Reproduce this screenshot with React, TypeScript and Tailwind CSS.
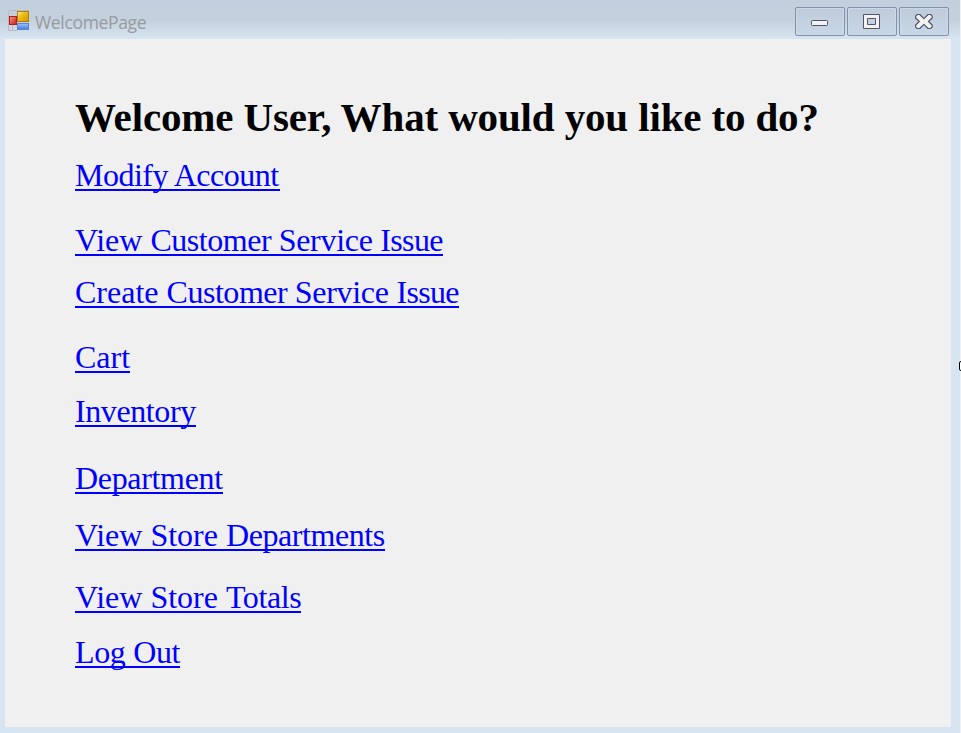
import React from "react";

type Word = { text: string; tracking: string };

const links: { box: string; words: Word[] }[] = [
  {
    box: "mt-[21px] w-[205px]",
    words: [
      { text: "Modify ", tracking: "tracking-[-0.5px]" },
      { text: "Account", tracking: "tracking-[-0.5px]" },
    ],
  },
  {
    box: "mt-[34px] w-[368px]",
    words: [
      { text: "View ", tracking: "tracking-[0px]" },
      { text: "Customer ", tracking: "tracking-[-0.46px]" },
      { text: "Service ", tracking: "tracking-[-0.3px]" },
      { text: "Issue", tracking: "tracking-[-0.65px]" },
    ],
  },
  {
    box: "mt-[21px] w-[384px]",
    words: [
      { text: "Create ", tracking: "tracking-[0px]" },
      { text: "Customer ", tracking: "tracking-[-0.46px]" },
      { text: "Service ", tracking: "tracking-[-0.3px]" },
      { text: "Issue", tracking: "tracking-[-0.65px]" },
    ],
  },
  { box: "mt-[34px] w-[55px]", words: [{ text: "Cart", tracking: "tracking-[0px]" }] },
  { box: "mt-[23px] w-[121px]", words: [{ text: "Inventory", tracking: "tracking-[-0.4px]" }] },
  { box: "mt-[36px] w-[148px]", words: [{ text: "Department", tracking: "tracking-[-0.33px]" }] },
  {
    box: "mt-[26px] w-[310px]",
    words: [
      { text: "View Store ", tracking: "tracking-[0px]" },
      { text: "Departments", tracking: "tracking-[-0.42px]" },
    ],
  },
  {
    box: "mt-[31px] w-[226px]",
    words: [
      { text: "View Store ", tracking: "tracking-[0px]" },
      { text: "Totals", tracking: "tracking-[-0.4px]" },
    ],
  },
  { box: "mt-[24px] w-[105px]", words: [{ text: "Log Out", tracking: "tracking-[-0.35px]" }] },
];

function AppIcon() {
  return (
    <svg width="22" height="22" viewBox="0 0 22 22" shapeRendering="crispEdges">
      <defs>
        <linearGradient id="gold" x1="0" y1="0" x2="1" y2="1">
          <stop offset="0" stopColor="#fff0a0" />
          <stop offset="0.4" stopColor="#eebc18" />
          <stop offset="1" stopColor="#d79500" />
        </linearGradient>
        <linearGradient id="blue" x1="0" y1="0" x2="0" y2="1">
          <stop offset="0" stopColor="#9cc4fc" />
          <stop offset="1" stopColor="#4478e0" />
        </linearGradient>
        <linearGradient id="red" x1="0" y1="0" x2="1" y2="1">
          <stop offset="0" stopColor="#f59b90" />
          <stop offset="1" stopColor="#c31818" />
        </linearGradient>
      </defs>
      <path d="M.5 .5H21M.5 .5V20.5H9M4.5 15V20" fill="none" stroke="#bcb9bb" />
      <rect x="9.5" y="1.5" width="11" height="10" fill="url(#gold)" stroke="#ad7b10" />
      <rect x="9.5" y="13.5" width="11" height="6" fill="url(#blue)" stroke="#5a86cf" />
      <rect x="1.5" y="6.5" width="7" height="8" fill="url(#red)" stroke="#b8191c" />
    </svg>
  );
}

function WindowButton({ label, children }: { label: string; children: React.ReactNode }) {
  return (
    <button
      aria-label={label}
      className="h-[29px] w-[50px] rounded-[2px] border border-[#8491ad] bg-linear-to-b from-[#bdcbdb] to-[#c8d7e7] shadow-[inset_0_0_0_1px_#ced9e6]"
    >
      <svg className="block" width="48" height="27" viewBox="0 0 48 27" fill="#f2f2f2" stroke="#535666">
        {children}
      </svg>
    </button>
  );
}

export default function App() {
  return (
    <div className="relative flex h-[733px] w-[961px] flex-col overflow-hidden bg-[#d7e4f2]">
      <header className="flex h-[39px] shrink-0 items-start bg-linear-to-b from-[#c2cfde] from-0% via-[#c3d0de] via-50% to-[#d7e4f2] to-100% pr-3">
        <div className="ml-2 mt-[10px]">
          <AppIcon />
        </div>
        <h2 className="ml-[5px] mt-[10px] font-['Open_Sans','Noto_Sans',sans-serif] text-[17.5px] leading-6 tracking-[-0.33px] text-[#999a9c]">
          WelcomePage
        </h2>
        <div className="ml-auto mt-[7px] flex gap-[2px]">
          <WindowButton label="Minimize">
            <rect x="15.5" y="12.5" width="16" height="5" rx="0.8" />
          </WindowButton>
          <WindowButton label="Maximize">
            <path d="M15.5 6.5h16v14h-16z M19.5 10.5v6h8v-6z" fillRule="evenodd" />
          </WindowButton>
          <WindowButton label="Close">
            <path
              d="M17.2 6.5h2.6L23.9 10.6 28 6.5h2.6l1.6 1.6v1.9L28.5 13.5l3.7 3.5v1.9l-1.6 1.6H28L23.9 16.4l-4.1 4.1h-2.6l-1.6-1.6V17l3.7-3.5-3.7-3.5V8.1z"
              strokeLinejoin="round"
              strokeWidth="1.2"
            />
          </WindowButton>
        </div>
      </header>
      <main className="ml-[5px] mr-[10px] h-[688px] bg-[#f0f0f0] pl-[70px] pt-[56px] font-['Liberation_Serif',serif]">
        <h1 className="h-[44px] whitespace-nowrap text-[41px] font-bold leading-[44px] tracking-[-0.14px] text-black">
          Welcome User, What would you like to do?
        </h1>
        <nav className="flex flex-col items-start">
          {links.map((link, index) => (
            <a
              key={index}
              href="#"
              className={`block h-[31px] whitespace-nowrap border-b-2 border-[#0000ff] text-[32px] leading-[30px] text-[#0000ff] ${link.box}`}
            >
              {link.words.map((word) => (
                <span key={word.text} className={word.tracking}>
                  {word.text}
                </span>
              ))}
            </a>
          ))}
        </nav>
      </main>
      <div className="absolute right-0 top-0 h-full w-px bg-[#f0f0f0]" />
      <div className="absolute left-[959px] top-[361px] h-[10px] w-2 rounded-[2px] border border-black bg-white" />
    </div>
  );
}
